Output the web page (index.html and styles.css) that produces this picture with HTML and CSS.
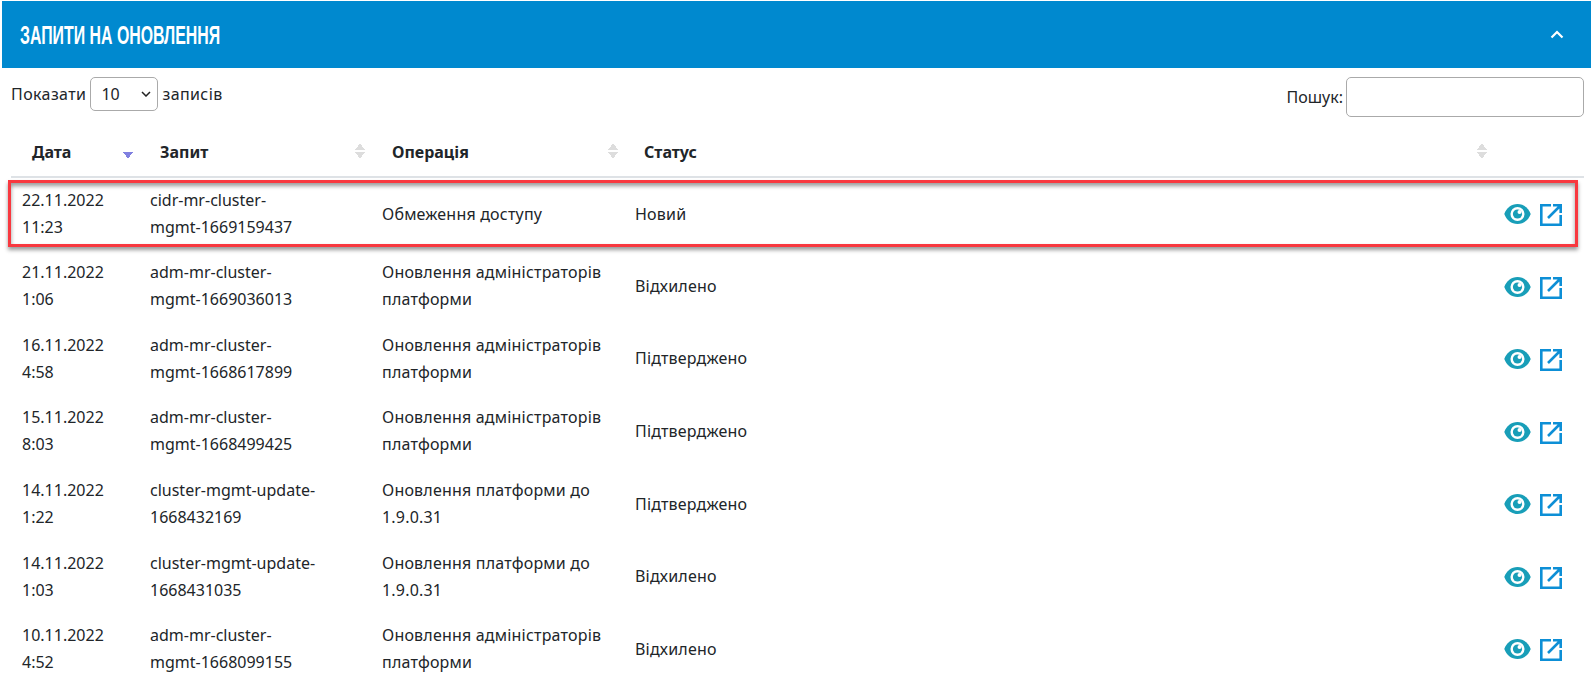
FILE: index.html
```html
<!DOCTYPE html>
<html lang="uk">
<head>
<meta charset="utf-8">
<title>Запити на оновлення</title>
<link rel="stylesheet" href="styles.css">
</head>
<body>
<svg class="defs" width="0" height="0">
  <symbol id="i-eye" viewBox="0 0 576 512"><path fill="#189eb8" d="M288 43C155 43 50 130 6 256c44 126 149 213 282 213s238-87 282-213C526 130 421 43 288 43z"/><circle cx="288" cy="256" r="150" fill="#fff"/><circle cx="288" cy="256" r="98" fill="#189eb8"/><circle cx="332" cy="212" r="44" fill="#fff"/></symbol>
  <symbol id="i-ext" viewBox="0 0 22 22"><path d="M11 1.300H1.300v19.400h19.400V11M8 14 20.500 1.500M13 1.300h7.700V9" fill="none" stroke="#0d8fd6" stroke-width="2.600"/></symbol>
</svg>
<section class="panel">
  <header class="panel-head">
    <h1 class="panel-title"><span>ЗАПИТИ НА ОНОВЛЕННЯ</span></h1>
    <svg class="chevron" viewBox="0 0 14 9" width="14" height="9"><path d="M1.500 7.500 7 2l5.500 5.500" fill="none" stroke="#fff" stroke-width="2.200"/></svg>
  </header>
  <div class="controls">
    <label class="length">Показати
      <span class="select"><span>10</span><svg viewBox="0 0 10 6" width="10" height="6"><path d="M1 1l4 4 4-4" fill="none" stroke="#222" stroke-width="1.500"/></svg></span>
      записів</label>
    <label class="search">Пошук:<span class="search-input"></span></label>
  </div>
  <table class="grid">
    <colgroup><col class="c1"><col class="c2"><col class="c3"><col class="c4"><col><col class="c6"></colgroup>
    <thead>
      <tr>
        <th class="sorted">Дата</th>
        <th class="sortable">Запит</th>
        <th class="sortable">Операція</th>
        <th></th>
        <th class="sortable status-head">Статус</th>
        <th></th>
      </tr>
    </thead>
    <tbody>
      <tr><td>22.11.2022<br>11:23</td><td>cidr-mr-cluster-<br>mgmt-1669159437</td><td class="wide">Обмеження доступу</td><td class="wide" colspan="2">Новий</td><td class="acts"><svg class="eye"><use href="#i-eye"/></svg><svg class="ext"><use href="#i-ext"/></svg></td></tr>
      <tr><td>21.11.2022<br>1:06</td><td>adm-mr-cluster-<br>mgmt-1669036013</td><td class="wide">Оновлення адміністраторів<br>платформи</td><td class="wide" colspan="2">Відхилено</td><td class="acts"><svg class="eye"><use href="#i-eye"/></svg><svg class="ext"><use href="#i-ext"/></svg></td></tr>
      <tr><td>16.11.2022<br>4:58</td><td>adm-mr-cluster-<br>mgmt-1668617899</td><td class="wide">Оновлення адміністраторів<br>платформи</td><td class="wide" colspan="2">Підтверджено</td><td class="acts"><svg class="eye"><use href="#i-eye"/></svg><svg class="ext"><use href="#i-ext"/></svg></td></tr>
      <tr><td>15.11.2022<br>8:03</td><td>adm-mr-cluster-<br>mgmt-1668499425</td><td class="wide">Оновлення адміністраторів<br>платформи</td><td class="wide" colspan="2">Підтверджено</td><td class="acts"><svg class="eye"><use href="#i-eye"/></svg><svg class="ext"><use href="#i-ext"/></svg></td></tr>
      <tr><td>14.11.2022<br>1:22</td><td>cluster-mgmt-update-<br>1668432169</td><td class="wide">Оновлення платформи до<br>1.9.0.31</td><td class="wide" colspan="2">Підтверджено</td><td class="acts"><svg class="eye"><use href="#i-eye"/></svg><svg class="ext"><use href="#i-ext"/></svg></td></tr>
      <tr><td>14.11.2022<br>1:03</td><td>cluster-mgmt-update-<br>1668431035</td><td class="wide">Оновлення платформи до<br>1.9.0.31</td><td class="wide" colspan="2">Відхилено</td><td class="acts"><svg class="eye"><use href="#i-eye"/></svg><svg class="ext"><use href="#i-ext"/></svg></td></tr>
      <tr><td>10.11.2022<br>4:52</td><td>adm-mr-cluster-<br>mgmt-1668099155</td><td class="wide">Оновлення адміністраторів<br>платформи</td><td class="wide" colspan="2">Відхилено</td><td class="acts"><svg class="eye"><use href="#i-eye"/></svg><svg class="ext"><use href="#i-ext"/></svg></td></tr>
    </tbody>
  </table>
  <div class="highlight"></div>
</section>
</body>
</html>
```
FILE: styles.css
```css
* { box-sizing: border-box; }
html, body { margin: 0; height: 678px; overflow: hidden; background: #fff; }
body {
  padding: 1px 0 0 2px;
  font-family: "Noto Sans", "Open Sans", sans-serif;
  font-size: 16px;
  color: #212529;
}
.defs { position: absolute; }
.panel { position: relative; }
.panel-head {
  height: 67px;
  background: #0089cf;
  display: flex;
  align-items: center;
  justify-content: space-between;
  padding: 0 27px 0 18px;
}
.panel-title {
  margin: 0;
  color: #fff;
  font-family: "Liberation Sans", sans-serif;
  font-size: 25px;
  font-weight: 700;
  line-height: 30px;
}
.panel-title span { display: inline-block; transform: scaleX(.635); transform-origin: 0 50%; white-space: nowrap; }
.controls {
  display: flex;
  justify-content: space-between;
  padding: 9px 7px 0 9px;
  height: 68px;
  background: #fff;
}
.length { display: flex; align-items: center; gap: 4px; height: 34px; letter-spacing: .4px; }
.select {
  width: 68px; height: 34px;
  border: 1px solid #aaa; border-radius: 5px;
  display: flex; align-items: center; justify-content: space-between;
  padding: 0 6px 0 10px;
  font-size: 16px;
  letter-spacing: 0;
}
.search { display: flex; align-items: center; gap: 3px; height: 40px; }
.search-input {
  width: 238px; height: 40px;
  border: 1px solid #aaa; border-radius: 5px;
}
.grid {
  width: 1573px;
  margin-left: 9px;
  border-collapse: collapse;
  table-layout: fixed;
}
.c1 { width: 129px; } .c2 { width: 232px; } .c3 { width: 253px; } .c4 { width: 10px; } .c6 { width: 90px; }
th {
  position: relative;
  text-align: left;
  height: 41px;
  font-weight: 700;
  padding: 0 10px 10px 20px;
  line-height: 27px;
  vertical-align: bottom;
  border-bottom: 2px solid #dee2e6;
  white-space: nowrap;
}
th:first-child { padding-left: 21px; }
.status-head { padding-left: 9px; }
td {
  padding: 9px 10px;
  line-height: 27px;
  height: 72.600px;
  vertical-align: middle;
}
td:first-child { padding-left: 11px; }
.wide { letter-spacing: .2px; }
.acts { text-align: right; padding-right: 22px; white-space: nowrap; }
.eye { width: 27px; height: 24px; vertical-align: middle; margin: -2px 9px 0 0; }
.ext { width: 22px; height: 22px; vertical-align: middle; }
.sorted::after, .sortable::after {
  content: "";
  position: absolute;
  top: 7px; right: 7px;
  width: 10px; height: 16px;
}
.sortable::after {
  background:
    linear-gradient(to bottom right, transparent 50%, #ddd 50%) 0 0/5px 7px no-repeat,
    linear-gradient(to bottom left, transparent 50%, #ddd 50%) 5px 0/5px 7px no-repeat,
    linear-gradient(to top right, transparent 50%, #ddd 50%) 0 9px/5px 7px no-repeat,
    linear-gradient(to top left, transparent 50%, #ddd 50%) 5px 9px/5px 7px no-repeat;
}
.sorted::after {
  background:
    linear-gradient(to top right, transparent 50%, #8080e0 50%) 0 9px/5px 7px no-repeat,
    linear-gradient(to top left, transparent 50%, #8080e0 50%) 5px 9px/5px 7px no-repeat;
}
.highlight {
  position: absolute;
  left: 6px; top: 179px;
  width: 1570px; height: 67px;
  border: 3px solid #f8383f;
  box-shadow: 0 3px 4px rgba(0,0,0,.4), inset 0 3px 4px rgba(0,0,0,.4);
}
```
